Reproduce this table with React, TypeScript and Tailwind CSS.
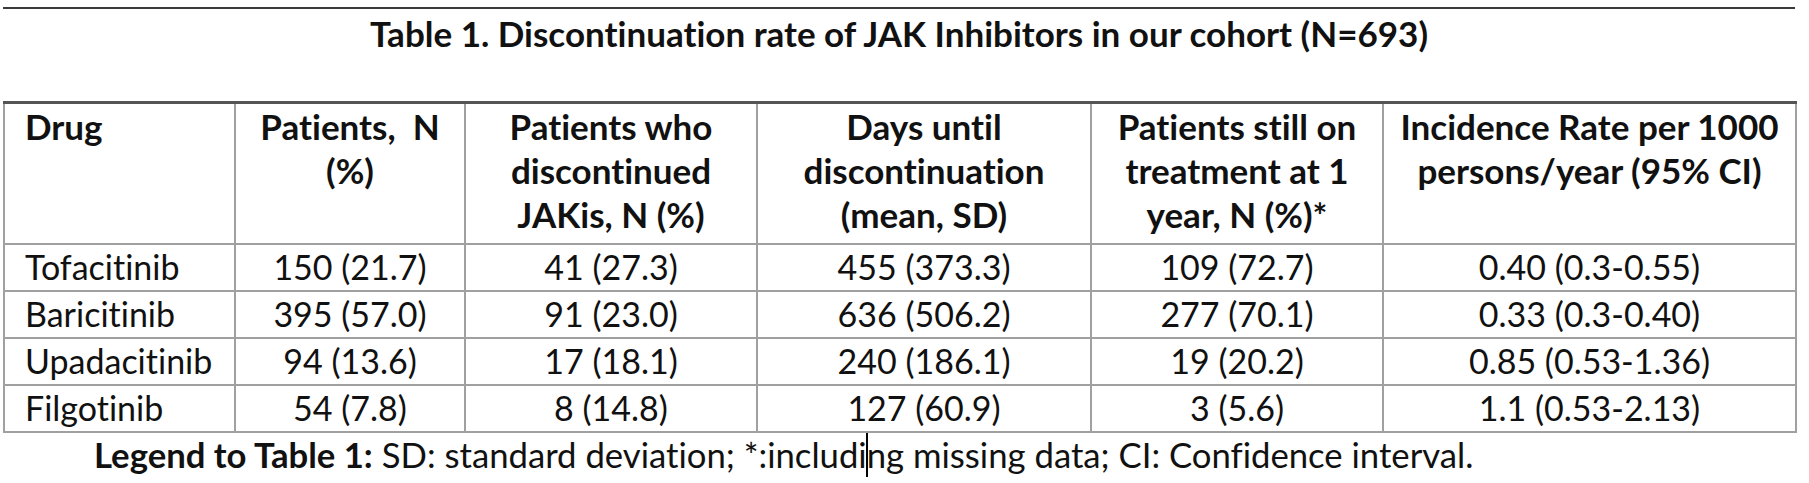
const rows = [
  ["Tofacitinib", "150 (21.7)", "41 (27.3)", "455 (373.3)", "109 (72.7)", "0.40 (0.3-0.55)"],
  ["Baricitinib", "395 (57.0)", "91 (23.0)", "636 (506.2)", "277 (70.1)", "0.33 (0.3-0.40)"],
  ["Upadacitinib", "94 (13.6)", "17 (18.1)", "240 (186.1)", "19 (20.2)", "0.85 (0.53-1.36)"],
  ["Filgotinib", "54 (7.8)", "8 (14.8)", "127 (60.9)", "3 (5.6)", "1.1 (0.53-2.13)"],
];

const headCell =
  "border-2 border-[#a0a0a0] border-t-[3px] border-t-[#555] align-top leading-[44px] font-bold text-[35px]";

const App = () => {
  return (
    <div className="w-[1809px] h-[483px] bg-white text-[#111] overflow-hidden font-[family-name:Lato,sans-serif] [font-variant-ligatures:none]">
      <div className="ml-[3px] mt-[7px] w-[1792px] h-[2px] bg-[#3a3a3a]"></div>

      <h1 className="ml-[3px] w-[1792px] mt-[3px] text-center text-[35px] leading-[42px] font-bold">
        Table 1. Discontinuation rate of JAK Inhibitors in our cohort (N=693)
      </h1>

      <table className="ml-[3px] mt-[47px] w-[1792px] table-fixed border-collapse text-[34px]">
        <colgroup>
          <col className="w-[231px]" />
          <col className="w-[230px]" />
          <col className="w-[292px]" />
          <col className="w-[334px]" />
          <col className="w-[292px]" />
          <col className="w-[413px]" />
        </colgroup>
        <thead>
          <tr className="h-[141px]">
            <th className={headCell + " text-left pl-[20px]"}>Drug</th>
            <th className={headCell + " text-center"}>
              Patients,&nbsp; N<br />(%)
            </th>
            <th className={headCell + " text-center"}>
              Patients who<br />discontinued<br />JAKis, N (%)
            </th>
            <th className={headCell + " text-center"}>
              Days until<br />discontinuation<br />(mean, SD)
            </th>
            <th className={headCell + " text-center"}>
              Patients still on<br />treatment at 1<br />year, N (%)*
            </th>
            <th className={headCell + " text-center"}>
              Incidence Rate per 1000<br />persons/year (95% CI)
            </th>
          </tr>
        </thead>
        <tbody>
          {rows.map((row, index) => (
            <tr key={index} className="h-[47px]">
              {row.map((cell, cellIndex) => (
                <td
                  key={cellIndex}
                  className={
                    cellIndex === 0
                      ? "border-2 border-[#a0a0a0] text-left pl-[20px] leading-[44px]"
                      : "border-2 border-[#a0a0a0] text-center leading-[44px]"
                  }
                >
                  {cell}
                </td>
              ))}
            </tr>
          ))}
        </tbody>
      </table>

      <p className="ml-[94px] mt-0 text-[34.7px] leading-[44px] whitespace-nowrap">
        <span className="font-bold">Legend to Table 1:</span> SD: standard deviation; *:includi
        <span className="inline-block w-[2px] h-[44px] bg-black align-top -mx-[1px]"></span>
        ng missing data; CI: Confidence interval.
      </p>
    </div>
  );
};

export default App;
